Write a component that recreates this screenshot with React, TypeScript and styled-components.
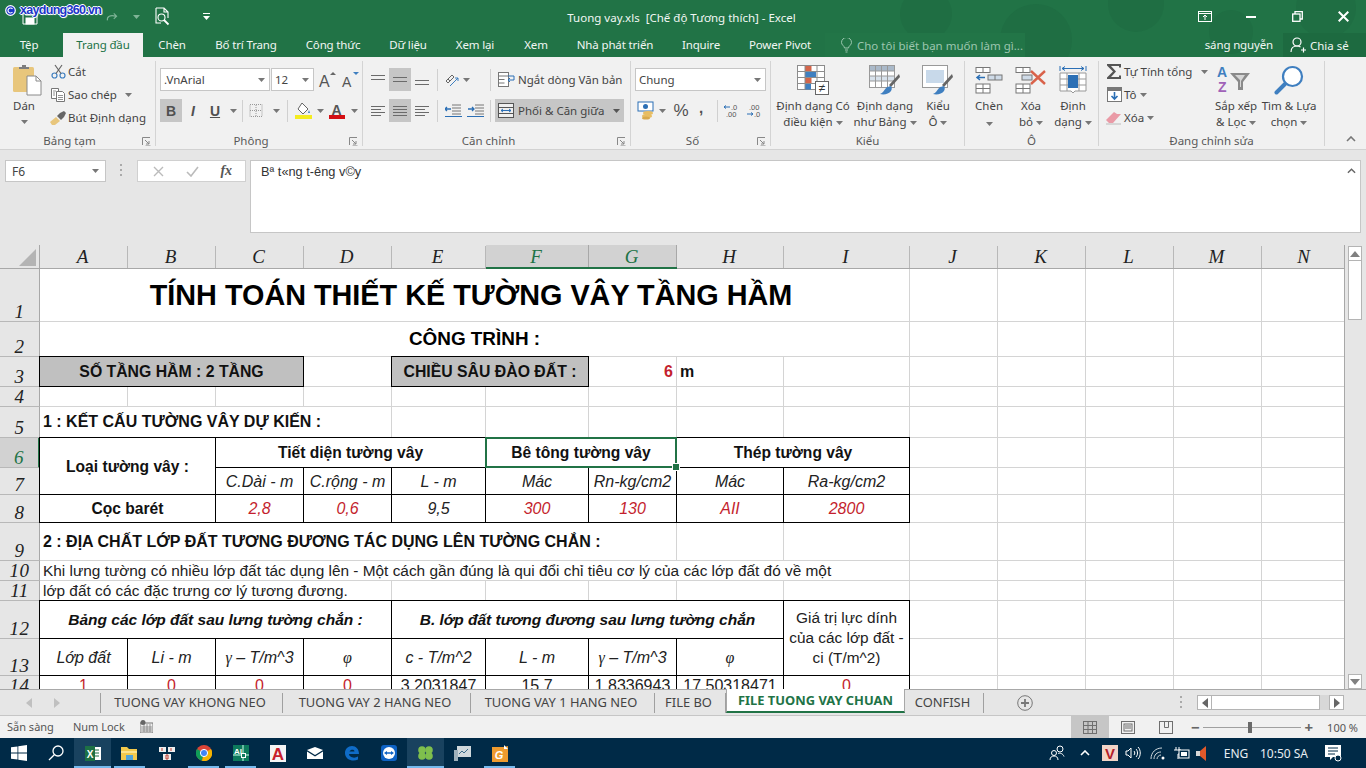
import React from 'react';
import styled, { createGlobalStyle } from 'styled-components';

const UI = `"Noto Sans", "Open Sans", sans-serif`;
const XL = `"Liberation Sans", Arial, sans-serif`;
const SERIF = `"Liberation Serif", "Times New Roman", serif`;
const GREEN = '#217346';

const Global = createGlobalStyle`
  html, body { margin: 0; padding: 0; background: #e6e6e6; }
  #root { width: 1366px; height: 768px; overflow: hidden; }
  * { box-sizing: border-box; }
`;

const Page = styled.div`
  width: 1366px; height: 768px; display: flex; flex-direction: column; overflow: hidden;
  font-family: ${UI}; font-size: 11.5px; color: #444; position: relative;
`;

/* ---------- Title bar ---------- */
const Header = styled.header`
  background: ${GREEN}; position: relative; overflow: hidden; flex: none; height: 57px;
`;
const Pattern = styled.svg`position: absolute; right: 0; top: 0; pointer-events: none;`;
const TitleRow = styled.div`
  height: 33px; display: grid; grid-template-columns: 1fr auto 1fr; align-items: center; position: relative;
`;
const Qat = styled.div`display: flex; align-items: center; height: 33px;`;
const QatItem = styled.span<{ $w: number }>`
  width: ${p => p.$w}px; height: 33px; display: flex; align-items: center; justify-content: center;
`;
const Title = styled.div`color: #f2f7f4; font-size: 11.5px; white-space: pre; padding-right: 3px; padding-top: 1px;`;
const WinBtns = styled.div`display: flex; justify-content: flex-end; align-items: center; height: 33px;`;
const WinBtn = styled.span`width: 46px; height: 30px; display: flex; align-items: center; justify-content: center;`;
const Mark = styled.div`
  position: absolute; left: 5px; top: 3px; display: flex; align-items: center; gap: 4px;
  font-family: ${XL}; font-weight: 700; font-size: 12.5px; color: #1b36c8; letter-spacing: -0.7px;
  text-shadow: 1px 0 0 #fff, -1px 0 0 #fff, 0 1px 0 #fff, 0 -1px 0 #fff, 1px 1px 1px #ddd;
`;
const TabRow = styled.nav`height: 24px; display: flex; align-items: stretch; position: relative;`;
const Tab = styled.div<{ $w: number; $on?: boolean; $mr?: number }>`
  width: ${p => p.$w}px; margin-right: ${p => p.$mr || 0}px; display: flex; align-items: center; justify-content: center;
  color: ${p => (p.$on ? GREEN : '#f1f6f3')}; background: ${p => (p.$on ? '#f1f1f1' : 'transparent')};
  font-size: 11.5px; letter-spacing: -0.15px; white-space: nowrap; padding-bottom: 1px;
`;
const TellMe = styled.div`
  width: 200px; display: flex; align-items: center; gap: 5px; padding-left: 16px; color: #9cc6af; font-size: 11.5px;
  white-space: nowrap; overflow: hidden; background: #227547;
  svg { flex: none; }
`;
const User = styled.div`
  margin-left: auto; display: flex; align-items: center; color: #f1f6f3; font-size: 11.5px; letter-spacing: -0.15px; padding-right: 10px; padding-bottom: 1px;
`;
const Share = styled.div`
  width: 83px; background: #1d6a40; display: flex; align-items: center; gap: 3px; padding-left: 7px; color: #f1f6f3; font-size: 11.5px;
  svg { flex: none; }
`;

/* ---------- Ribbon ---------- */
const Ribbon = styled.section`
  flex: none; height: 93px; background: #f1f1f1; border-bottom: 1px solid #d2d2d2; padding-top: 4px; display: flex; align-items: flex-start;
`;
const Group = styled.div<{ $w: number }>`
  width: ${p => p.$w}px; height: 85px; border-right: 1px solid #d4d4d4; display: flex; flex-direction: column; flex: none;
`;
const GroupBody = styled.div<{ $pl?: number; $pt?: number }>`
  height: 73px; flex: none; display: flex; padding-left: ${p => p.$pl || 0}px; padding-top: ${p => p.$pt || 0}px;
`;
const GroupLabel = styled.div<{ $launch?: boolean }>`
  height: 14px; line-height: 14px; text-align: center; color: #595959; font-size: 11.5px; position: relative; white-space: nowrap;
  padding-right: ${p => (p.$launch ? 16 : 0)}px;
`;
const Launcher = styled.span`position: absolute; right: 4px; top: 3px; display: flex;`;
const Col = styled.div<{ $w?: number; $gap?: number }>`
  display: flex; flex-direction: column; gap: ${p => p.$gap || 0}px; ${p => (p.$w ? `width:${p.$w}px;` : '')} flex: none;
`;
const MiniRow = styled.div`height: 23px; padding-bottom: 2px; display: flex; align-items: center; white-space: nowrap; color: #444; font-size: 11.5px;`;
const MiniIcon = styled.span`width: 20px; display: flex; justify-content: center; align-items: center; flex: none;`;
const ToolRow = styled.div`height: 23px; display: flex; align-items: center;`;
const Combo = styled.div<{ $w: number }>`
  width: ${p => p.$w}px; height: 23px; background: #fff; border: 1px solid #c6c6c6; display: flex; align-items: center;
  justify-content: space-between; padding: 0 4px 0 3px; font-size: 11.5px; color: #444; margin-right: 1px;
`;
const Tool = styled.span<{ $w?: number; $on?: boolean }>`
  width: ${p => p.$w || 22}px; height: 23px; display: flex; align-items: center; justify-content: center; gap: 3px; flex: none;
  background: ${p => (p.$on ? '#c6c6c6' : 'transparent')};
`;
const Sep = styled.span<{ $ml?: number; $mr?: number }>`
  width: 1px; height: 22px; background: #d0d0d0; margin-left: ${p => p.$ml || 0}px; margin-right: ${p => p.$mr || 0}px; flex: none;
`;
const Wide = styled.div<{ $on?: boolean; $w: number; $gap?: number }>`
  width: ${p => p.$w}px; height: 23px; display: flex; align-items: center; gap: ${p => p.$gap ?? 2}px; padding-left: 3px; font-size: 11.5px; color: #444; white-space: nowrap;
  background: ${p => (p.$on ? '#c6c6c6' : 'transparent')};
`;
const Large = styled.div<{ $w: number }>`
  width: ${p => p.$w}px; flex: none; display: flex; flex-direction: column; align-items: center; color: #444; font-size: 11.5px; line-height: 16px; white-space: nowrap;
`;
const LargeIcon = styled.span<{ $dx?: number }>`
  height: 37px; display: flex; align-items: center; justify-content: center; flex: none; margin-left: ${p => p.$dx || 0}px;
`;
const CaretLine = styled.span`height: 16px; display: flex; align-items: center;`;
const CaretWrap = styled.span<{ $ml?: number }>`display: inline-flex; margin-left: ${p => p.$ml ?? 3}px; vertical-align: middle;`;
const Letter = styled.span<{ $b?: boolean; $i?: boolean; $u?: boolean; $size?: number; $lift?: number }>`
  font-family: ${XL}; font-size: ${p => p.$size || 14}px; color: #505050; font-weight: ${p => (p.$b ? 700 : 400)}; font-style: ${p => (p.$i ? 'italic' : 'normal')};
  text-decoration: ${p => (p.$u ? 'underline' : 'none')}; margin-bottom: ${p => p.$lift || 0}px;
`;
const Collapse = styled.span`margin: 75px 0 0 21px; display: flex;`;

/* ---------- Formula bar ---------- */
const FormulaBar = styled.section`
  flex: none; height: 95px; background: #e6e6e6; padding: 10px 5px 12px; display: flex; align-items: flex-start;
`;
const NameBox = styled.div`
  width: 101px; height: 22px; background: #fff; border: 1px solid #c6c6c6; display: flex; align-items: center; justify-content: space-between;
  padding: 0 6px 0 6px; color: #444; font-size: 12px;
`;
const Dots = styled.span`width: 31px; display: flex; justify-content: center; padding-top: 4px;`;
const FnBox = styled.div`
  width: 109px; height: 22px; background: #fff; border: 1px solid #d0d0d0; display: flex; align-items: center; justify-content: space-around; padding: 0 2px 0 4px; margin-right: 4px;
`;
const FxMark = styled.span`font: italic 700 14px ${SERIF}; color: #555;`;
const FormulaText = styled.div`
  flex: 1; height: 73px; background: #fff; border: 1px solid #c6c6c6; padding: 3px 4px 3px 10px; font-family: ${XL}; font-size: 12.8px; color: #333;
  display: flex; justify-content: space-between; align-items: flex-start;
  svg { margin-top: 4px; }
`;

/* ---------- Sheet ---------- */
const SheetWrap = styled.div`flex: none; height: 444px; display: flex; background: #e6e6e6; overflow: hidden;`;
const Sheet = styled.div`
  width: 1345px; height: 444px; flex: none; overflow: hidden; display: grid; background: #fff;
  grid-template-columns: 40px 88px 88px 88px 88px 94px 103px 88px 107px 126px 88px 88px 88px 88px 83px;
  grid-template-rows: 24px 53px 35px 30px 20px 31px 30px 27px 28px 38px 20px 20px 38px 37px 20px;
  border-right: 1px solid #a8a8a8;
`;
const Corner = styled.div`
  grid-column: 1; grid-row: 1; background: #e6e6e6; border-right: 1px solid #a8a8a8; border-bottom: 1px solid #a8a8a8; display: flex; align-items: flex-end; justify-content: flex-end; padding: 0 3px 2px 0;
`;
const ColHead = styled.div<{ $c: number; $on?: boolean; $last?: boolean }>`
  grid-column: ${p => p.$c}; grid-row: 1; position: relative; display: flex; align-items: center; justify-content: center; padding: 1px ${p => (p.$last ? 0 : 3)}px 0 0;
  background: ${p => (p.$on ? '#d2d2d2' : '#e6e6e6')}; color: ${p => (p.$on ? GREEN : '#222')};
  font: italic 19px ${SERIF};
  border-bottom: ${p => (p.$on ? `2px solid ${GREEN}` : '1px solid #a8a8a8')};
  &::after { content: ''; position: absolute; right: 0; bottom: 0; width: 1px; height: 22px; background: ${p => (p.$on ? '#a8a8a8' : '#b8b8b8')}; }
`;
const RowHead = styled.div<{ $r: number; $on?: boolean }>`
  grid-column: 1; grid-row: ${p => p.$r}; display: flex; align-items: flex-end; justify-content: center; overflow: hidden; letter-spacing: 0.4px;
  background: ${p => (p.$on ? '#d2d2d2' : '#e6e6e6')}; color: ${p => (p.$on ? GREEN : '#222')};
  font: italic 19px/19px ${SERIF};
  border-right: ${p => (p.$on ? `2px solid ${GREEN}` : '1px solid #a8a8a8')}; border-bottom: 1px solid #b8b8b8;
`;
type CellProps = {
  $c: number; $r: number; $cs?: number; $rs?: number; $ink?: boolean; $fill?: boolean; $sel?: boolean;
  $v?: 'title' | 'sub' | 'band' | 'head' | 'bold' | 'it' | 'red' | 'redb' | 'redn' | 'body' | 'boldit' | 'num';
  $al?: 'left' | 'right' | 'center'; $shift?: number;
};
const sizes: Record<string, string> = {
  title: 'font-size: 28.8px; font-weight: 700; color: #000;',
  sub: 'font-size: 18.9px; font-weight: 700; color: #000;',
  band: 'font-size: 15.8px; font-weight: 700; color: #111;',
  head: 'font-size: 15.6px; font-weight: 700; color: #111; padding-top: 1px;',
  bold: 'font-size: 16px; font-weight: 700; color: #111;',
  it: 'font-size: 16px; font-style: italic; color: #222; padding-top: 1px;',
  red: 'font-size: 16px; font-style: italic; color: #c41f2e; padding-top: 1px;',
  redb: 'font-size: 16px; font-weight: 700; color: #c41f2e;',
  redn: 'font-size: 16px; color: #c41f2e;',
  body: 'font-size: 15.4px; color: #222;',
  boldit: 'font-size: 15.5px; font-weight: 700; font-style: italic; color: #111;',
  num: 'font-size: 16px; color: #222;',
};
const Cell = styled.div<CellProps>`
  grid-column: ${p => p.$c} / span ${p => p.$cs || 1}; grid-row: ${p => p.$r} / span ${p => p.$rs || 1};
  display: flex; align-items: center; white-space: pre; position: relative; padding: 0 ${p => 3 + (p.$shift || 0)}px 0 3px; line-height: 20px;
  justify-content: ${p => (p.$al === 'left' ? 'flex-start' : p.$al === 'right' ? 'flex-end' : 'center')};
  text-align: center; font-family: ${XL}; min-width: 0;
  ${p => sizes[p.$v || 'body']}
  background: ${p => (p.$fill ? '#c0c0c0' : '#fff')};
  border-right: 1px solid ${p => (p.$ink ? '#000' : '#d4d4d4')};
  border-bottom: 1px solid ${p => (p.$ink ? '#000' : '#d4d4d4')};
  ${p => (p.$ink ? 'box-shadow: -1px 0 0 #000, 0 -1px 0 #000, -1px -1px 0 #000;' : '')}
  ${p => p.$sel ? `
    z-index: 2;
    &::after { content: ''; position: absolute; left: -1px; top: -1px; right: -1px; bottom: -1px; border: 2px solid ${GREEN}; pointer-events: none; }
    &::before { content: ''; position: absolute; right: -4px; bottom: -4px; width: 6px; height: 6px; background: ${GREEN}; border: 1px solid #fff; z-index: 1; }
  ` : ''}
`;
const Sym = styled.span`font-family: ${SERIF}; font-style: italic;`;

const VScroll = styled.div`width: 21px; height: 444px; flex: none; padding: 1px 4px 0 3px; display: flex; flex-direction: column; align-items: stretch;`;
const ScrollBtn = styled.div`height: 15px; background: #fff; border: 1px solid #b4b4b4; display: flex; align-items: center; justify-content: center; flex: none;`;
const ScrollThumb = styled.div`height: 59px; background: #fff; border: 1px solid #b4b4b4; border-top: 0; flex: none;`;
const ScrollTrack = styled.div`flex: 1;`;

/* ---------- Sheet tabs ---------- */
const TabsBar = styled.div`
  flex: none; height: 27px; background: #e6e6e6; display: flex; border-bottom: 1px solid #c6c6c6; border-top: 1px solid #a8a8a8;
`;
const Nav = styled.div`width: 101px; height: 20px; margin-top: 3px; display: flex; align-items: center; gap: 20px; padding-left: 25px; border-right: 1px solid #a0a0a0;`;
const SheetTab = styled.div<{ $w: number; $on?: boolean }>`
  width: ${p => p.$w}px; display: flex; align-items: center; justify-content: center; white-space: nowrap; font-size: 12.9px;
  ${p => p.$on
    ? `height: 24px; background: #fff; color: ${GREEN}; font-weight: 700; border-bottom: 2px solid ${GREEN}; border-left: 1px solid #a8a8a8; border-right: 1px solid #a8a8a8; margin-top: -1px;`
    : `height: 20px; margin-top: 3px; color: #444; border-right: 1px solid #a0a0a0; padding: 0 3px 2px 0;`}
`;
const AddWrap = styled.span`margin-left: 33px; display: flex; align-items: center; height: 25px; width: 20px;`;
const HDots = styled.span`margin-left: 143px; display: flex; align-items: center; width: 17px;`;
const HScroll = styled.div`width: 147px; height: 15px; margin-top: 5px; display: flex; background: #d8d8d8;`;
const HBtn = styled.span`width: 15px; background: #fff; border: 1px solid #b4b4b4; display: flex; align-items: center; justify-content: center; flex: none;`;
const HThumb = styled.span`width: 108px; background: #fff; border: 1px solid #b4b4b4; border-left: 0; flex: none;`;
const HGap = styled.span`flex: 1;`;

/* ---------- Status bar ---------- */
const Status = styled.div`
  flex: none; height: 22px; background: #f1f1f1; display: flex; align-items: center; padding-left: 7px; color: #555; font-size: 11px;
`;
const StatusText = styled.span<{ $ml?: number }>`margin-left: ${p => p.$ml || 0}px; white-space: nowrap; display: flex; align-items: center; padding-bottom: 2px;`;
const StatusRight = styled.div`margin-left: auto; display: flex; align-items: center; height: 22px;`;
const ViewBtn = styled.span<{ $on?: boolean }>`
  width: 38px; height: 22px; display: flex; align-items: center; justify-content: center; background: ${p => (p.$on ? '#c6c6c6' : 'transparent')};
`;
const Zoom = styled.div`width: 126px; margin-left: 4px; padding: 0 2px; display: flex; align-items: center; gap: 3px; color: #666; font-size: 15px; font-weight: 700;`;
const ZoomTrack = styled.span`flex: 1; height: 1px; background: #a0a0a0; position: relative; display: block;`;
const ZoomThumb = styled.span`position: absolute; left: 45px; top: -5px; width: 4px; height: 11px; background: #6a6a6a;`;
const ZoomPct = styled.span`width: 51px; text-align: right; padding-right: 8px; color: #555; font-size: 11px;`;

/* ---------- Task bar ---------- */
const Taskbar = styled.footer`
  flex: none; height: 30px; background: #002a47; display: flex; align-items: stretch; color: #e8eef2;
`;
const Task = styled.span<{ $open?: boolean; $act?: boolean }>`
  width: 37px; flex: none; display: flex; align-items: center; justify-content: center; position: relative;
  background: ${p => (p.$act ? '#19425f' : 'transparent')};
  ${p => (p.$open ? `&::after { content: ''; position: absolute; left: ${p.$act ? 0 : 3}px; right: ${p.$act ? 0 : 3}px; bottom: 0; height: 2px; background: #76b9ed; }` : '')}
`;
const Tray = styled.div`margin-left: auto; display: flex; align-items: center; height: 30px; padding-right: 10px;`;
const TrayItem = styled.span<{ $w: number }>`width: ${p => p.$w}px; display: flex; align-items: center; justify-content: center; font-size: 12px; white-space: nowrap; flex: none;`;

/* ---------- Icons ---------- */
const Caret = ({ c = '#777' }: { c?: string }) => (
  <svg width="7" height="4" viewBox="0 0 7 4"><path d="M0 0h7L3.5 4z" fill={c} /></svg>
);
const PasteIcon = () => (
  <svg width="30" height="32" viewBox="0 0 30 32">
    <rect x="1" y="3" width="21" height="25" rx="1.5" fill="#e8c67c" />
    <path d="M7 5V3h3V1h4v2h3v2z" fill="#7d7d7d" />
    <path d="M15 12h9l5 5v14H15z" fill="#fff" stroke="#8a8a8a" />
    <path d="M24 12v5h5" fill="none" stroke="#8a8a8a" />
  </svg>
);
const CutIcon = () => (
  <svg width="15" height="15" viewBox="0 0 15 15" fill="none">
    <circle cx="3.5" cy="11.5" r="2.5" stroke="#3f7fc0" strokeWidth="1.2" />
    <circle cx="11.5" cy="11.5" r="2.5" stroke="#3f7fc0" strokeWidth="1.2" />
    <path d="M5 9.5 11 1M10 9.5 4 1" stroke="#666" strokeWidth="1.2" />
  </svg>
);
const CopyIcon = () => (
  <svg width="16" height="15" viewBox="0 0 16 15" fill="#fff" stroke="#777">
    <path d="M1.5 1.5h7v10h-7z" /><path d="M6.5 4.5h6l2 2v8h-8z" />
    <path d="M8 8.5h5M8 10.5h5M8 12.5h5M3 4h3M3 6h2M3 8h2" strokeWidth=".8" />
  </svg>
);
const BrushIcon = () => (
  <svg width="16" height="14" viewBox="0 0 16 14">
    <path d="M0 11 6 6l4 4-5 4H2z" fill="#e8c67c" /><path d="M7 5l3-3 4-2 2 2-2 4-3 3z" fill="#666" />
  </svg>
);
const Launch = () => (
  <svg width="9" height="9" viewBox="0 0 9 9" fill="none" stroke="#888"><path d="M.5 8V.5H8" /><path d="M3 3l4 4M7 4v3H4" /><path d="M8.5 8.5h-5" stroke="#bbb" /></svg>
);
const FontA = ({ size, up }: { size: number; up?: boolean }) => (
  <svg width="20" height="19" viewBox="0 0 20 19">
    <text x="1" y="17" fontFamily="Liberation Sans" fontSize={size} fill="#555">A</text>
    <path d={up ? 'M12 5l3-3 3 3z' : 'M12 2h6l-3 3z'} fill={up ? '#666' : '#3f7fc0'} />
  </svg>
);
const Borders = () => (
  <svg width="14" height="14" viewBox="0 0 14 14" fill="none" stroke="#999" strokeDasharray="1 1"><rect x="1" y=".5" width="12" height="12" /><path d="M7 1v12M1 6.5h12" /></svg>
);
const FillIcon = () => (
  <svg width="17" height="17" viewBox="0 0 17 17">
    <path d="M7 1l6 6-5 5-5-5z" fill="#fff" stroke="#666" /><path d="M14 8l1 3h-2z" fill="#3f7fc0" /><rect x="0" y="13" width="17" height="4" fill="#f4ec20" />
  </svg>
);
const ColorIcon = () => (
  <svg width="16" height="17" viewBox="0 0 16 17">
    <text x="2.5" y="12.5" fontFamily="Liberation Sans" fontWeight="700" fontSize="14" fill="#555">A</text><rect y="13" width="16" height="4" fill="#d40f14" />
  </svg>
);
const Lines = ({ ys, ws }: { ys: number[]; ws?: number[] }) => (
  <svg width="16" height="14" viewBox="0 0 16 14" stroke="#6b6b6b">
    {ys.map((y, i) => <path key={y} d={`M1 ${y + .5}h${ws ? ws[i] : 14}`} />)}
  </svg>
);
const Orient = () => (
  <svg width="16" height="14" viewBox="0 0 16 14" fill="none" stroke="#666"><path d="M2 8l6-6 2 2-6 6zM4 6l2 2" /><path d="M6 13l8-8M14 5h-3M14 5v3" stroke="#3f7fc0" /></svg>
);
const Indent = ({ rev }: { rev?: boolean }) => (
  <svg width="17" height="13" viewBox="0 0 17 13" fill="none"><path d={rev ? 'M7 1h9M7 4h9M7 7h9M7 10h9' : 'M8 1h9M8 4h9M8 7h9M8 10h9'} stroke="#777" /><path d="M0 12.500h17" stroke="#2b6fb5" /><path d={rev ? 'M6 5H0M2 3L0 5l2 2' : 'M1 5h6M5 3l2 2-2 2'} stroke="#2b6fb5" strokeWidth="1.3" /></svg>
);
const WrapIcon = () => (
  <svg width="18" height="15" viewBox="0 0 18 15" fill="none" stroke="#777"><rect x=".5" y=".5" width="10" height="14" fill="#fff" /><path d="M.5 4h10M.5 7.5h6M.5 11h6" /><path d="M10 4h6v4h-6M12 6l-2 2 2 2" stroke="#2b6fb5" /></svg>
);
const MergeIcon = () => (
  <svg width="16" height="15" viewBox="0 0 16 15" fill="none" stroke="#555"><rect x=".5" y=".5" width="15" height="14" fill="#eee" /><path d="M.5 4.5h15M.5 10.5h15" /><path d="M3 7.5h10M5 6L3 7.5 5 9M11 6l2 1.5L11 9" stroke="#2b6fb5" /></svg>
);
const Money = () => (
  <svg width="20" height="19" viewBox="0 0 20 19"><rect x="1" y="1" width="15" height="9" fill="#fff" stroke="#2b6fb5" /><circle cx="8.5" cy="5.5" r="2.5" fill="#2b6fb5" /><ellipse cx="11" cy="12" rx="5" ry="2" fill="#e8bd62" /><ellipse cx="10" cy="15" rx="5" ry="2" fill="#e8bd62" /><ellipse cx="9" cy="17" rx="4" ry="1.6" fill="#d9a94c" /></svg>
);
const DecIcon = ({ rev }: { rev?: boolean }) => (
  <svg width="18" height="15" viewBox="0 0 18 15">
    <text x={rev ? 3 : 8} y="6.5" fontFamily="Liberation Sans" fontSize="7.5" fill="#555">{rev ? '.00' : '.0'}</text>
    <text x={rev ? 8 : 3} y="14" fontFamily="Liberation Sans" fontSize="7.5" fill="#555">{rev ? '.0' : '.00'}</text>
    <path d={rev ? 'M1 11h6M5 9.5L7 11l-2 1.5' : 'M7 4H1M3 2.5L1 4l2 1.5'} stroke="#2b6fb5" fill="none" />
  </svg>
);
const CfIcon = () => (
  <svg width="32" height="30" viewBox="0 0 32 30" fill="#fff" stroke="#8c8c8c">
    <rect x=".5" y=".5" width="27" height="24" />
    <rect x="8" y="1" width="6.5" height="5.5" fill="#d4654a" stroke="none" /><rect x="8" y="7" width="11" height="5.5" fill="#3f7fc0" stroke="none" /><rect x="8" y="13" width="6.5" height="5.5" fill="#d4654a" stroke="none" /><rect x="8" y="19" width="6" height="5.5" fill="#3f7fc0" stroke="none" />
    <path d="M8 .5v24M20 .5v24M.5 6.5h27M.5 12.5h27M.5 18.5h27" fill="none" />
    <rect x="18.5" y="16.5" width="13" height="13" stroke="#666" />
    <text x="25" y="27" textAnchor="middle" fontFamily="Liberation Sans" fontSize="12" fill="#333" stroke="none">≠</text>
  </svg>
);
const TableIcon = () => (
  <svg width="32" height="30" viewBox="0 0 32 30" fill="none" stroke="#999">
    <rect x=".5" y=".5" width="25" height="22" fill="#fff" />
    <rect x="1" y="1" width="24" height="5" fill="#aab9c9" stroke="none" /><rect x="1" y="11" width="24" height="5" fill="#d8e2ec" stroke="none" />
    <path d="M6.5 1v21M12.5 1v21M18.5 1v21M1 6h24M1 11h24M1 16h24" />
    <path d="M30 9 20 20l2 2L31 12z" fill="#666" stroke="none" /><path d="M22 21c-2 1-3 0-5 2s-3 5-6 6c4 1 9 0 11-3 1-2 1-3 0-5z" fill="#3f7fc0" stroke="none" />
  </svg>
);
const StyleIcon = () => (
  <svg width="32" height="30" viewBox="0 0 32 30" fill="none" stroke="#999">
    <rect x=".5" y=".5" width="25" height="22" fill="#fff" /><rect x="4" y="5" width="18" height="13" fill="#c8d9ea" stroke="none" />
    <path d="M30 9 20 20l2 2L31 12z" fill="#666" stroke="none" /><path d="M22 21c-2 1-3 0-5 2s-3 5-6 6c4 1 9 0 11-3 1-2 1-3 0-5z" fill="#3f7fc0" stroke="none" />
  </svg>
);
const InsertIcon = () => (
  <svg width="28" height="28" viewBox="0 0 28 28" fill="#fff" stroke="#777">
    <rect x="1" y="1.5" width="14" height="5" /><path d="M8 1.5v5" />
    <rect x="1" y="18" width="14" height="9" /><path d="M1 22.5h14M8 18v9" />
    <rect x="13" y="9" width="14" height="5" fill="#cfdbe8" /><path d="M20 9v5" />
    <path d="M10 11.5H2M5 9L2 11.5 5 14" stroke="#2b6fb5" strokeWidth="1.5" fill="none" />
  </svg>
);
const DeleteIcon = () => (
  <svg width="32" height="28" viewBox="0 0 32 28" fill="#fff" stroke="#777">
    <rect x="1" y="1.5" width="14" height="5" /><path d="M8 1.5v5" />
    <rect x="1" y="18" width="14" height="9" /><path d="M1 22.5h14M8 18v9" />
    <rect x="7" y="9" width="10" height="5" fill="#cfdbe8" />
    <path d="M16 5 30 18M30 5 16 18" stroke="#d9624a" strokeWidth="2.4" fill="none" />
  </svg>
);
const FormatIcon = () => (
  <svg width="28" height="30" viewBox="0 0 28 30" fill="#fff" stroke="#999">
    <path d="M1 1v5M27 1v5" stroke="#2b6fb5" /><path d="M3 3.5h22M3 3.5l3-2M3 3.5l3 2M25 3.5l-3-2M25 3.5l-3 2" stroke="#2b6fb5" fill="none" />
    <path d="M1 8h26v18H16l-2 2-2-2H1z" /><path d="M8 8v18M20 8v18M1 14h26M1 20h26" fill="none" />
    <rect x="9" y="10" width="10" height="13" fill="#2b6fb5" stroke="none" />
  </svg>
);
const SumIcon = () => (
  <svg width="16" height="15" viewBox="0 0 16 15"><path d="M1 0h14v3.5h-2V2H5l5 5.5L5 13h8v-1.5h2V15H1v-1.6L7 7.5 1 1.6z" fill="#555" /></svg>
);
const FillDown = () => (
  <svg width="15" height="15" viewBox="0 0 15 15"><rect x=".5" y=".5" width="14" height="14" fill="#fff" stroke="#777" /><rect x="1" y="1" width="13" height="3" fill="#777" /><path d="M7.5 5v7M4.5 9l3 3 3-3" stroke="#2b6fb5" strokeWidth="1.6" fill="none" /></svg>
);
const Eraser = () => (
  <svg width="16" height="14" viewBox="0 0 16 14"><path d="M0 9l8-8 3 2 4 0-8 9H3z" fill="#ea9aa6" /><path d="M0 13h15" stroke="#bbb" /></svg>
);
const SortIcon = () => (
  <svg width="38" height="30" viewBox="0 0 38 30">
    <text x="0" y="12" fontFamily="Liberation Sans" fontWeight="700" fontSize="14" fill="#3f7fc0">A</text>
    <text x="1" y="27" fontFamily="Liberation Sans" fontWeight="700" fontSize="14" fill="#a062b8">Z</text>
    <path d="M13 8h20l-7 9v8h-5v-8z" fill="#8a8a8a" /><path d="M18 10h10l-4 6v6h-1v-7z" fill="#d6d6d6" />
  </svg>
);
const FindIcon = () => (
  <svg width="30" height="30" viewBox="0 0 30 30" fill="none"><circle cx="18.5" cy="11.5" r="9.5" stroke="#3f7fc0" strokeWidth="2.2" fill="#fff" /><path d="M11 19 2.5 27.5" stroke="#3f7fc0" strokeWidth="4" strokeLinecap="round" /></svg>
);
const SaveIcon = () => (
  <svg width="16" height="16" viewBox="0 0 16 16" fill="none" stroke="#fff"><path d="M1 1h11l3 3v11H1z" /><rect x="4" y="1" width="7" height="5" /><rect x="4" y="9" width="8" height="6" fill="#fff" /></svg>
);
const Redo = () => (
  <svg width="17" height="13" viewBox="0 0 17 13" fill="none" stroke="#7fb497" strokeWidth="1.6"><path d="M2 12c-1-6 4-8 12-6M11 2l4 4-4 4" /></svg>
);
const Preview = () => (
  <svg width="15" height="19" viewBox="0 0 15 19" fill="none" stroke="#fff" strokeWidth="1.1"><path d="M1 1h8l4 4v6M9 1v4h4M1 1v15h5" /><circle cx="6.5" cy="10.5" r="3.5" /><path d="M9 13l4.5 4.5" strokeWidth="1.8" /></svg>
);
const Customize = () => (
  <svg width="8" height="7" viewBox="0 0 8 7" fill="#fff"><rect width="7" height="1" /><path d="M0 3h7L3.5 7z" /></svg>
);
const RibbonMode = () => (
  <svg width="14" height="11" viewBox="0 0 14 11" fill="none" stroke="#fff"><rect x=".5" y=".5" width="13" height="10" /><path d="M.5 2.5h13M7 9V4.5M5 6l2-2 2 2" /></svg>
);
const Restore = () => (
  <svg width="11" height="11" viewBox="0 0 11 11" fill="none" stroke="#fff" strokeWidth="1.3"><rect x=".7" y="3" width="7.3" height="7.3" /><path d="M3 3V.7h7.3V8H8" /></svg>
);
const CloseX = () => (
  <svg width="11" height="11" viewBox="0 0 11 11" stroke="#fff" strokeWidth="2"><path d="M.7.7l9.6 9.6M10.3.7.7 10.3" /></svg>
);
const Bulb = () => (
  <svg width="11" height="15" viewBox="0 0 11 15" fill="none" stroke="#9cc6af"><path d="M3.5 10c0-2-3-3-3-5.500a5 5 0 0 1 10 0c0 2.500-3 3.500-3 5.500zM4 12h3M4.500 14h2" /></svg>
);
const Person = () => (
  <svg width="17" height="16" viewBox="0 0 17 16" fill="none" stroke="#fff" strokeWidth="1.2"><circle cx="7" cy="5" r="4" /><path d="M1 15c0-4 2.500-6 6-6 1.500 0 2.500.4 3.500 1M11 13h5M13.500 10.500v5" /></svg>
);
const XMark = ({ c }: { c: string }) => (
  <svg width="11" height="11" viewBox="0 0 11 11" stroke={c} strokeWidth="1.4"><path d="M1 1l9 9M10 1l-9 9" /></svg>
);
const Check = ({ c }: { c: string }) => (
  <svg width="13" height="11" viewBox="0 0 13 11" fill="none" stroke={c} strokeWidth="1.6"><path d="M1 6l4 4 7-9" /></svg>
);
const VDots = () => (
  <svg width="3" height="13" viewBox="0 0 3 13" fill="#aaa"><rect y="0" width="2" height="2" /><rect y="5" width="2" height="2" /><rect y="10" width="2" height="2" /></svg>
);
const ChevUp = ({ c = '#666', w = 10 }: { c?: string; w?: number }) => (
  <svg width={w} height="6" viewBox="0 0 10 6" fill="none" stroke={c} strokeWidth="1.6"><path d="M1 5l4-4 4 4" /></svg>
);
const Tri = ({ d, c = '#808080' }: { d: 'u' | 'd' | 'l' | 'r'; c?: string }) => {
  const paths = { u: 'M0 6 5 0l5 6z', d: 'M0 0h10L5 6z', l: 'M7 0v10L1 5z', r: 'M1 0v10l6-5z' };
  const h = d === 'u' || d === 'd';
  return <svg width={h ? 10 : 8} height={h ? 6 : 10} viewBox={h ? '0 0 10 6' : '0 0 8 10'}><path d={paths[d]} fill={c} /></svg>;
};
const AddSheet = () => (
  <svg width="16" height="16" viewBox="0 0 16 16" fill="none" stroke="#777"><circle cx="8" cy="8" r="7.300" /><path d="M4 8h8M8 4v8" strokeWidth="1.800" /></svg>
);
const MacroIcon = () => (
  <svg width="13" height="13" viewBox="0 0 13 13"><rect y="3" width="13" height="10" fill="#eee" stroke="#777" /><circle cx="3" cy="2.500" r="2.500" fill="#666" /><path d="M1 7h11M1 9h11M1 11h11M4 4v8M7 4v8M10 4v8" stroke="#777" strokeWidth=".7" /></svg>
);
const GridView = () => (
  <svg width="14" height="13" viewBox="0 0 14 13" fill="none" stroke="#6f6f6f"><rect x=".5" y=".5" width="13" height="12" /><path d="M5 .5v12M9.500.5v12M.5 4.500h13M.5 8.500h13" /></svg>
);
const PageView = () => (
  <svg width="14" height="13" viewBox="0 0 14 13" fill="none" stroke="#6f6f6f"><rect x=".5" y=".5" width="13" height="12" /><rect x="3" y="3" width="8" height="7" /><path d="M4 5h6M4 7h6" /></svg>
);
const BreakView = () => (
  <svg width="14" height="13" viewBox="0 0 14 13" fill="none" stroke="#6f6f6f"><rect x=".5" y=".5" width="13" height="12" /><path d="M5.500.5v6h4V.5" /></svg>
);

const StartLogo = () => (
  <svg width="16" height="16" viewBox="0 0 16 16" fill="#fff"><path d="M0 2.300 6.500 1.400v6.200H0zM7.300 1.300 16 0v7.600H7.300zM0 8.400h6.500v6.200L0 13.700zM7.300 8.400H16V16l-8.700-1.300z" /></svg>
);
const SearchGlyph = () => (
  <svg width="16" height="16" viewBox="0 0 16 16" fill="none" stroke="#fff" strokeWidth="1.300"><circle cx="10" cy="6" r="5" /><path d="M6.300 9.700 1 15" /></svg>
);
const ExcelApp = () => (
  <svg width="16" height="15" viewBox="0 0 16 15"><rect x="8" y="1" width="8" height="13" fill="#fff" /><path d="M10 4h4M10 7h4M10 10h4" stroke="#1e7145" /><rect y="0" width="10" height="15" fill="#1e7145" /><text x="5" y="11.500" textAnchor="middle" fontFamily="Liberation Sans" fontWeight="700" fontSize="10" fill="#fff">X</text></svg>
);
const FolderApp = () => (
  <svg width="17" height="14" viewBox="0 0 17 14"><path d="M0 1h6l2 2h8v11H0z" fill="#f2c94c" /><path d="M0 5h16v2H0z" fill="#fbe38e" /><path d="M5 14V9h7v5z" fill="#4fa3d9" /></svg>
);
const NetApp = () => (
  <svg width="16" height="14" viewBox="0 0 16 14"><rect y="1" width="7" height="5" fill="#eee" /><rect x="9" y="1" width="7" height="5" fill="#eee" /><rect x="4" y="8" width="8" height="6" fill="#eee" /><path d="M3 2v3M12 2v3M7 9h2v4H7z" fill="none" stroke="#c0392b" /></svg>
);
const ChromeApp = () => (
  <svg width="16" height="16" viewBox="0 0 16 16"><circle cx="8" cy="8" r="8" fill="#db4437" /><path d="M8 8 1 4A8 8 0 0 0 6 15.800z" fill="#0f9d58" /><path d="M8 8l7-4a8 8 0 0 1-9 11.800z" fill="#f4b400" /><circle cx="8" cy="8" r="3.600" fill="#4285f4" stroke="#fff" /></svg>
);
const AlApp = () => (
  <svg width="16" height="16" viewBox="0 0 16 16"><rect width="16" height="16" fill="#0d7a5c" /><text x="1" y="9" fontFamily="Liberation Sans" fontWeight="700" fontSize="8" fill="#fff">Al</text><path d="M10 0v16M0 10h16" stroke="#cfe" /><rect x="8.500" y="8.500" width="4" height="4" fill="#0d7a5c" stroke="#fff" /></svg>
);
const CadApp = () => (
  <svg width="16" height="17" viewBox="0 0 16 17"><rect width="16" height="17" fill="#f5f5f5" /><text x="8" y="15" textAnchor="middle" fontFamily="Liberation Sans" fontWeight="700" fontSize="17" fill="#c8202c">A</text></svg>
);
const MailApp = () => (
  <svg width="16" height="12" viewBox="0 0 16 12"><path d="M0 3 8 0l8 3-8 5z" fill="#fff" /><path d="M0 4.500v7.500h16V4.500L8 9.500z" fill="#fff" /></svg>
);
const EdgeApp = () => (
  <svg width="16" height="16" viewBox="0 0 16 16" fill="none"><path d="M1 8c0-4 3-7 7-7s7 3 7 8H5c0 3 5 5 9 2.500v3C9 17 1 15 1 8z" fill="#0f6cc8" /><path d="M5.500 6.500h5c0-2.500-4-2.500-5 0z" fill="#002a47" /></svg>
);
const TvApp = () => (
  <svg width="16" height="16" viewBox="0 0 16 16"><rect width="16" height="16" rx="3" fill="#0e62c4" /><circle cx="8" cy="8" r="6" fill="#fff" /><path d="M3 8l3-2v1.300h4V6l3 2-3 2V8.700H6V10z" fill="#0e62c4" /></svg>
);
const CloverApp = () => (
  <svg width="17" height="16" viewBox="0 0 17 16" fill="#7fbf4d"><circle cx="5" cy="5" r="3.800" /><circle cx="12" cy="5" r="3.800" /><circle cx="5" cy="11" r="3.800" /><circle cx="12" cy="11" r="3.800" /></svg>
);
const MonitorApp = () => (
  <svg width="17" height="15" viewBox="0 0 17 15"><rect x="3" y="0" width="14" height="11" fill="#cfd8dc" /><path d="M5 8l3-3 2 2 4-4" stroke="#3a6b8a" fill="none" /><rect x="0" y="4" width="4" height="11" fill="#9fb1bb" /></svg>
);
const GApp = () => (
  <svg width="16" height="17" viewBox="0 0 16 17"><path d="M0 2h12l4-1v16H0z" fill="#ee9b2f" /><path d="M12 0l4 4h-4z" fill="#fff" /><text x="7" y="13.500" textAnchor="middle" fontFamily="Liberation Sans" fontWeight="700" fontStyle="italic" fontSize="11" fill="#fff">G</text></svg>
);
const People = () => (
  <svg width="16" height="16" viewBox="0 0 16 16" fill="none" stroke="#fff"><circle cx="11" cy="4" r="3" /><circle cx="5" cy="8" r="2.500" /><path d="M1 15c0-3 2-4 4-4s4 1 4 4M9 8.500c2-.8 5 0 6 3" /></svg>
);
const VApp = () => (
  <svg width="16" height="16" viewBox="0 0 16 16"><rect width="16" height="16" fill="#f2d5c8" /><text x="8" y="14" textAnchor="middle" fontFamily="Liberation Sans" fontWeight="700" fontSize="15" fill="#b3202a">V</text></svg>
);
const Speaker = () => (
  <svg width="17" height="14" viewBox="0 0 17 14" fill="none" stroke="#fff"><path d="M1 5h2l3-3v10L3 9H1zM9 5c1 1 1 3 0 4M11 3c2 2 2 6 0 8M13 1c3 3 3 9 0 12" /></svg>
);
const Wifi = () => (
  <svg width="16" height="14" viewBox="0 0 16 14" fill="none" stroke="#cfd8dc"><path d="M1 13C1 6 6 2 12 2M4 13c0-4 3-7 7-7M7 13c0-2 2-4 4-4" /><circle cx="13" cy="12" r="1.500" fill="#fff" stroke="none" /></svg>
);
const Battery = () => (
  <svg width="17" height="13" viewBox="0 0 17 13" fill="none" stroke="#fff"><path d="M3 0v3M6 0v3M1 3h7v2c0 2-2 2-3 2v5" /><rect x="6" y="3" width="10" height="8" fill="#002a47" /><rect x="8" y="5" width="6" height="4" fill="#fff" stroke="none" /></svg>
);
const RedSpeaker = () => (
  <svg width="15" height="15" viewBox="0 0 15 15"><path d="M0 5h4l6-5v15l-6-5H0z" fill="#e0592a" /><rect x="0" y="5" width="4" height="5" fill="#d8d8d8" /></svg>
);
const Notify = () => (
  <svg width="17" height="17" viewBox="0 0 17 17"><path d="M0 0h16v12H8l-3 3v-3H0z" fill="#fff" /><path d="M3 3h10M3 6h10M3 9h7" stroke="#002a47" /><circle cx="13" cy="13" r="3" fill="#002a47" stroke="#fff" /></svg>
);

/* ---------- Data ---------- */
const COLS = ['A', 'B', 'C', 'D', 'E', 'F', 'G', 'H', 'I', 'J', 'K', 'L', 'M', 'N'];
const ROWS = Array.from({ length: 14 }, (_, i) => i + 1);
const gridRow = (r: number) => r + 1;

type C = { c: number; r: number; cs?: number; rs?: number; t?: React.ReactNode; v?: CellProps['$v']; al?: CellProps['$al']; ink?: boolean; fill?: boolean; sel?: boolean; shift?: number };
const ink = (rows: C[]): C[] => rows.map(x => ({ ...x, ink: true }));
const CELLS: C[] = [
  { c: 1, r: 1, cs: 9, t: 'TÍNH TOÁN THIẾT KẾ TƯỜNG VÂY TẦNG HẦM', v: 'title', shift: 7 },
  { c: 1, r: 2, cs: 9, t: 'CÔNG TRÌNH :', v: 'sub' },
  ...ink([{ c: 1, r: 3, cs: 3, t: 'SỐ TẦNG HẦM : 2 TẦNG', v: 'band', fill: true }]),
  { c: 4, r: 3 },
  ...ink([{ c: 5, r: 3, cs: 2, t: 'CHIỀU SÂU ĐÀO ĐẤT :', v: 'band', fill: true }]),
  { c: 7, r: 3, t: '6', v: 'redb', al: 'right' },
  { c: 8, r: 3, t: 'm', v: 'bold', al: 'left' },
  { c: 9, r: 3 },
  ...[1, 2, 3, 4, 5, 6, 7, 8, 9].map(c => ({ c, r: 4 })),
  { c: 1, r: 5, cs: 4, t: '1 : KẾT CẤU TƯỜNG VÂY DỰ KIẾN :', v: 'bold', al: 'left' },
  ...[5, 6, 7, 8, 9].map(c => ({ c, r: 5 })),
  ...ink([
    { c: 1, r: 6, cs: 2, rs: 2, t: 'Loại tường vây :', v: 'head' },
    { c: 3, r: 6, cs: 3, t: 'Tiết diện tường vây', v: 'head' },
    { c: 6, r: 6, cs: 2, t: 'Bê tông tường vây', v: 'head', sel: true },
    { c: 8, r: 6, cs: 2, t: 'Thép tường vây', v: 'head' },
    { c: 3, r: 7, t: 'C.Dài - m', v: 'it' },
    { c: 4, r: 7, t: 'C.rộng - m', v: 'it' },
    { c: 5, r: 7, t: 'L - m', v: 'it' },
    { c: 6, r: 7, t: 'Mác', v: 'it' },
    { c: 7, r: 7, t: 'Rn-kg/cm2', v: 'it' },
    { c: 8, r: 7, t: 'Mác', v: 'it' },
    { c: 9, r: 7, t: 'Ra-kg/cm2', v: 'it' },
    { c: 1, r: 8, cs: 2, t: 'Cọc barét', v: 'head' },
    { c: 3, r: 8, t: '2,8', v: 'red' },
    { c: 4, r: 8, t: '0,6', v: 'red' },
    { c: 5, r: 8, t: '9,5', v: 'it' },
    { c: 6, r: 8, t: '300', v: 'red' },
    { c: 7, r: 8, t: '130', v: 'red' },
    { c: 8, r: 8, t: 'AII', v: 'red' },
    { c: 9, r: 8, t: '2800', v: 'red' },
  ]),
  { c: 1, r: 9, cs: 7, t: '2 : ĐỊA CHẤT LỚP ĐẤT TƯƠNG ĐƯƠNG TÁC DỤNG LÊN TƯỜNG CHẮN :', v: 'bold', al: 'left' },
  { c: 8, r: 9 }, { c: 9, r: 9 },
  { c: 1, r: 10, cs: 9, t: 'Khi lưng tường có nhiều lớp đất tác dụng lên - Một cách gần đúng là qui đổi chỉ tiêu cơ lý của các lớp đất đó về một', v: 'body', al: 'left' },
  { c: 1, r: 11, cs: 4, t: 'lớp đất có các đặc trưng cơ lý tương đương.', v: 'body', al: 'left' },
  ...[5, 6, 7, 8, 9].map(c => ({ c, r: 11 })),
  ...ink([
    { c: 1, r: 12, cs: 4, t: 'Bảng các lớp đất sau lưng tường chắn :', v: 'boldit' },
    { c: 5, r: 12, cs: 4, t: 'B. lớp đất tương đương sau lưng tường chắn', v: 'boldit' },
    { c: 9, r: 12, rs: 2, t: 'Giá trị lực dính\ncủa các lớp đất -\nci (T/m^2)', v: 'body' },
    { c: 1, r: 13, t: 'Lớp đất', v: 'it' },
    { c: 2, r: 13, t: 'Li - m', v: 'it' },
    { c: 3, r: 13, t: <><Sym>γ</Sym> – T/m^3</>, v: 'it' },
    { c: 4, r: 13, t: <Sym>φ</Sym>, v: 'it' },
    { c: 5, r: 13, t: 'c - T/m^2', v: 'it' },
    { c: 6, r: 13, t: 'L - m', v: 'it' },
    { c: 7, r: 13, t: <><Sym>γ</Sym> – T/m^3</>, v: 'it' },
    { c: 8, r: 13, t: <Sym>φ</Sym>, v: 'it' },
    { c: 1, r: 14, t: '1', v: 'redn' },
    { c: 2, r: 14, t: '0', v: 'redn' },
    { c: 3, r: 14, t: '0', v: 'redn' },
    { c: 4, r: 14, t: '0', v: 'redn' },
    { c: 5, r: 14, t: '3.2031847', v: 'num' },
    { c: 6, r: 14, t: '15.7', v: 'num' },
    { c: 7, r: 14, t: '1.8336943', v: 'num' },
    { c: 8, r: 14, t: '17.50318471', v: 'num' },
    { c: 9, r: 14, t: '0', v: 'redn' },
  ]),
];

const SHEET_TABS: { t: string; w: number; on?: boolean }[] = [
  { t: 'TUONG VAY KHONG NEO', w: 182 },
  { t: 'TUONG VAY 2 HANG NEO', w: 188 },
  { t: 'TUONG VAY 1 HANG NEO', w: 184 },
  { t: 'FILE BO', w: 71 },
  { t: 'FILE TUONG VAY CHUAN', w: 179, on: true },
  { t: 'CONFISH', w: 79 },
];

export default function App() {
  return (
    <Page>
      <Global />
      <Header>
        <Pattern width="480" height="57" viewBox="0 0 480 57" fill="#1f6e43">
          <circle cx="40" cy="14" r="26" /><circle cx="150" cy="40" r="36" /><circle cx="250" cy="4" r="28" />
          <circle cx="345" cy="32" r="22" /><circle cx="440" cy="8" r="30" />
        </Pattern>
        <TitleRow>
          <Qat>
            <QatItem $w={16} />
            <QatItem $w={28}><SaveIcon /></QatItem>
            <QatItem $w={62} />
            <QatItem $w={12}><Redo /></QatItem>
            <QatItem $w={29}><CaretWrap $ml={8}><Caret c="#7fb497" /></CaretWrap></QatItem>
            <QatItem $w={30}><Preview /></QatItem>
            <QatItem $w={60}><Customize /></QatItem>
          </Qat>
          <Title>Tuong vay.xls  [Chế độ Tương thích] - Excel</Title>
          <WinBtns>
            <WinBtn><RibbonMode /></WinBtn>
            <WinBtn><svg width="10" height="2"><rect width="10" height="2" fill="#fff" /></svg></WinBtn>
            <WinBtn><Restore /></WinBtn>
            <WinBtn><CloseX /></WinBtn>
          </WinBtns>
        </TitleRow>
        <TabRow>
          <Tab $w={58} $mr={5}>Tệp</Tab>
          <Tab $w={80} $on>Trang đầu</Tab>
          <Tab $w={58}>Chèn</Tab>
          <Tab $w={90}>Bố trí Trang</Tab>
          <Tab $w={84}>Công thức</Tab>
          <Tab $w={66}>Dữ liệu</Tab>
          <Tab $w={68}>Xem lại</Tab>
          <Tab $w={54}>Xem</Tab>
          <Tab $w={104}>Nhà phát triển</Tab>
          <Tab $w={68}>Inquire</Tab>
          <Tab $w={90}>Power Pivot</Tab>
          <TellMe><Bulb />Cho tôi biết bạn muốn làm gì...</TellMe>
          <User>sáng nguyễn</User>
          <Share><Person />Chia sẻ</Share>
        </TabRow>
        <Mark>
          <svg width="11" height="11" viewBox="0 0 11 11" fill="none" stroke="#fff" strokeWidth="1.200"><circle cx="5.500" cy="5.500" r="4.800" fill="#1b36c8" /><path d="M7.500 4a2.500 2.500 0 1 0 0 3" /></svg>
          xaydung360.vn
        </Mark>
      </Header>

      <Ribbon>
        <Group $w={156}>
          <GroupBody>
            <Large $w={48}>
              <LargeIcon $dx={6}><PasteIcon /></LargeIcon>
              <span>Dán</span>
              <CaretLine><Caret /></CaretLine>
            </Large>
            <Col>
              <MiniRow><MiniIcon><CutIcon /></MiniIcon>Cắt</MiniRow>
              <MiniRow><MiniIcon><CopyIcon /></MiniIcon>Sao chép<CaretWrap $ml={8}><Caret /></CaretWrap></MiniRow>
              <MiniRow><MiniIcon><BrushIcon /></MiniIcon>Bút Định dạng</MiniRow>
            </Col>
          </GroupBody>
          <GroupLabel $launch>Bảng tạm<Launcher><Launch /></Launcher></GroupLabel>
        </Group>

        <Group $w={207}>
          <GroupBody $pl={4} $pt={7}>
            <Col $gap={8}>
              <ToolRow>
                <Combo $w={110}>.VnArial<Caret /></Combo>
                <Combo $w={43}>12<Caret /></Combo>
                <Tool $w={25}><FontA size={16} up /></Tool>
                <Tool $w={22}><FontA size={14} /></Tool>
              </ToolRow>
              <ToolRow>
                <Tool $on><Letter $b>B</Letter></Tool>
                <Tool><Letter $b $i>I</Letter></Tool>
                <Tool><Letter $b $u>U</Letter></Tool>
                <Tool $w={14}><Caret /></Tool>
                <Sep $ml={2} />
                <Tool $w={26}><Borders /></Tool>
                <Tool $w={14}><Caret /></Tool>
                <Sep $ml={4} $mr={5} />
                <Tool $w={20}><FillIcon /></Tool>
                <Tool $w={14}><Caret /></Tool>
                <Tool $w={20}><ColorIcon /></Tool>
                <Tool $w={14}><Caret /></Tool>
              </ToolRow>
            </Col>
          </GroupBody>
          <GroupLabel $launch>Phông<Launcher><Launch /></Launcher></GroupLabel>
        </Group>

        <Group $w={268}>
          <GroupBody $pl={4} $pt={7}>
            <Col $gap={8} $w={128}>
              <ToolRow>
                <Tool><Lines ys={[2, 6]} /></Tool>
                <Tool $on><Lines ys={[4, 8]} /></Tool>
                <Tool><Lines ys={[7, 11]} /></Tool>
                <Sep $ml={4} $mr={4} />
                <Tool $w={30}><Orient /><Caret /></Tool>
                <Sep $ml={18} />
              </ToolRow>
              <ToolRow>
                <Tool><Lines ys={[2, 5, 8, 11]} ws={[14, 10, 14, 10]} /></Tool>
                <Tool $on><Lines ys={[2, 5, 8, 11]} ws={[14, 14, 14, 14]} /></Tool>
                <Tool><Lines ys={[2, 5, 8, 11]} ws={[14, 10, 14, 10]} /></Tool>
                <Sep $ml={4} $mr={4} />
                <Tool $w={22}><Indent rev /></Tool>
                <Tool $w={22}><Indent /></Tool>
                <Sep $ml={4} />
              </ToolRow>
            </Col>
            <Col $gap={8}>
              <Wide $w={129}><WrapIcon />Ngắt dòng Văn bản</Wide>
              <Wide $w={129} $on $gap={4}><MergeIcon /><span>Phối &amp; Căn giữa</span><CaretWrap $ml={5}><Caret c="#555" /></CaretWrap></Wide>
            </Col>
          </GroupBody>
          <GroupLabel $launch>Căn chỉnh<Launcher><Launch /></Launcher></GroupLabel>
        </Group>

        <Group $w={140}>
          <GroupBody $pl={4} $pt={7}>
            <Col $gap={8}>
              <ToolRow><Combo $w={131}>Chung<Caret /></Combo></ToolRow>
              <ToolRow>
                <Tool $w={23}><Money /></Tool>
                <Tool $w={8}><Caret /></Tool>
                <Tool $w={30}><Letter $size={17}>%</Letter></Tool>
                <Tool $w={10}><Letter $b $size={15} $lift={6}>,</Letter></Tool>
                <Sep $ml={11} $mr={4} />
                <Tool $w={20}><DecIcon /></Tool>
                <Tool $w={26}><DecIcon rev /></Tool>
              </ToolRow>
            </Col>
          </GroupBody>
          <GroupLabel $launch>Số<Launcher><Launch /></Launcher></GroupLabel>
        </Group>

        <Group $w={194}>
          <GroupBody $pl={5}>
            <Large $w={74}><LargeIcon><CfIcon /></LargeIcon><span>Định dạng Có</span><span>điều kiện<CaretWrap><Caret /></CaretWrap></span></Large>
            <Large $w={70}><LargeIcon><TableIcon /></LargeIcon><span>Định dạng</span><span>như Bảng<CaretWrap><Caret /></CaretWrap></span></Large>
            <Large $w={36}><LargeIcon><StyleIcon /></LargeIcon><span>Kiểu</span><span>Ô<CaretWrap><Caret /></CaretWrap></span></Large>
          </GroupBody>
          <GroupLabel>Kiểu</GroupLabel>
        </Group>

        <Group $w={134}>
          <GroupBody $pl={3}>
            <Large $w={42}><LargeIcon><InsertIcon /></LargeIcon><span>Chèn</span><span><Caret /></span></Large>
            <Large $w={42}><LargeIcon><DeleteIcon /></LargeIcon><span>Xóa</span><span>bỏ<CaretWrap><Caret /></CaretWrap></span></Large>
            <Large $w={42}><LargeIcon><FormatIcon /></LargeIcon><span>Định</span><span>dạng<CaretWrap><Caret /></CaretWrap></span></Large>
          </GroupBody>
          <GroupLabel>Ô</GroupLabel>
        </Group>

        <Group $w={226}>
          <GroupBody $pl={5}>
            <Col $w={105}>
              <MiniRow><MiniIcon><SumIcon /></MiniIcon>Tự Tính tổng<CaretWrap $ml={9}><Caret /></CaretWrap></MiniRow>
              <MiniRow><MiniIcon><FillDown /></MiniIcon>Tô<CaretWrap><Caret /></CaretWrap></MiniRow>
              <MiniRow><MiniIcon><Eraser /></MiniIcon>Xóa<CaretWrap><Caret /></CaretWrap></MiniRow>
            </Col>
            <Large $w={54}><LargeIcon><SortIcon /></LargeIcon><span>Sắp xếp</span><span>&amp; Lọc<CaretWrap><Caret /></CaretWrap></span></Large>
            <Large $w={52}><LargeIcon><FindIcon /></LargeIcon><span>Tìm &amp; Lựa</span><span>chọn<CaretWrap><Caret /></CaretWrap></span></Large>
          </GroupBody>
          <GroupLabel>Đang chỉnh sửa</GroupLabel>
        </Group>
        <Collapse><ChevUp c="#777" /></Collapse>
      </Ribbon>

      <FormulaBar>
        <NameBox>F6<Caret /></NameBox>
        <Dots><VDots /></Dots>
        <FnBox><XMark c="#bbb" /><Check c="#bbb" /><FxMark>fx</FxMark></FnBox>
        <FormulaText>Bª t«ng t-êng v©y<ChevUp c="#666" w={9} /></FormulaText>
      </FormulaBar>

      <SheetWrap>
        <Sheet>
          <Corner><svg width="17" height="17"><path d="M17 0v17H0z" fill="#b4b4b4" /></svg></Corner>
          {COLS.map((n, i) => <ColHead key={n} $c={i + 2} $on={n === 'F' || n === 'G'} $last={n === 'N'}>{n}</ColHead>)}
          {ROWS.map(r => <RowHead key={r} $r={gridRow(r)} $on={r === 6}>{r}</RowHead>)}
          {ROWS.flatMap(r => [10, 11, 12, 13, 14].map(c => <Cell key={`${r}-${c}`} $c={c + 1} $r={gridRow(r)} />))}
          {CELLS.map(x => (
            <Cell key={`${x.r}:${x.c}`} $c={x.c + 1} $r={gridRow(x.r)} $cs={x.cs} $rs={x.rs} $v={x.v} $al={x.al} $ink={x.ink} $fill={x.fill} $sel={x.sel} $shift={x.shift}>
              {x.t}
            </Cell>
          ))}
        </Sheet>
        <VScroll>
          <ScrollBtn><Tri d="u" /></ScrollBtn>
          <ScrollThumb />
          <ScrollTrack />
          <ScrollBtn><Tri d="d" /></ScrollBtn>
        </VScroll>
      </SheetWrap>

      <TabsBar>
        <Nav><Tri d="l" c="#c0c0c0" /><Tri d="r" c="#c0c0c0" /></Nav>
        {SHEET_TABS.map(t => <SheetTab key={t.t} $w={t.w} $on={t.on}>{t.t}</SheetTab>)}
        <AddWrap><AddSheet /></AddWrap>
        <HDots><VDots /></HDots>
        <HScroll>
          <HBtn><Tri d="l" c="#666" /></HBtn>
          <HThumb />
          <HGap />
          <HBtn><Tri d="r" c="#666" /></HBtn>
        </HScroll>
      </TabsBar>

      <Status>
        <StatusText>Sẵn sàng</StatusText>
        <StatusText $ml={19}>Num Lock</StatusText>
        <StatusText $ml={15}><MacroIcon /></StatusText>
        <StatusRight>
          <ViewBtn $on><GridView /></ViewBtn>
          <ViewBtn><PageView /></ViewBtn>
          <ViewBtn><BreakView /></ViewBtn>
          <Zoom>−<ZoomTrack><ZoomThumb /></ZoomTrack>+</Zoom>
          <ZoomPct>100 %</ZoomPct>
        </StatusRight>
      </Status>

      <Taskbar>
        <Task><StartLogo /></Task>
        <Task><SearchGlyph /></Task>
        <Task $open $act><ExcelApp /></Task>
        <Task $open><FolderApp /></Task>
        <Task><NetApp /></Task>
        <Task $open><ChromeApp /></Task>
        <Task $open><AlApp /></Task>
        <Task><CadApp /></Task>
        <Task><MailApp /></Task>
        <Task><EdgeApp /></Task>
        <Task><TvApp /></Task>
        <Task $open $act><CloverApp /></Task>
        <Task><MonitorApp /></Task>
        <Task $open><GApp /></Task>
        <Tray>
          <TrayItem $w={26}><People /></TrayItem>
          <TrayItem $w={30}><ChevUp c="#fff" w={12} /></TrayItem>
          <TrayItem $w={20}><VApp /></TrayItem>
          <TrayItem $w={26}><Speaker /></TrayItem>
          <TrayItem $w={24}><Wifi /></TrayItem>
          <TrayItem $w={22}><Battery /></TrayItem>
          <TrayItem $w={22}><RedSpeaker /></TrayItem>
          <TrayItem $w={44}>ENG</TrayItem>
          <TrayItem $w={52}>10:50 SA</TrayItem>
          <TrayItem $w={46}><Notify /></TrayItem>
        </Tray>
      </Taskbar>
    </Page>
  );
}
